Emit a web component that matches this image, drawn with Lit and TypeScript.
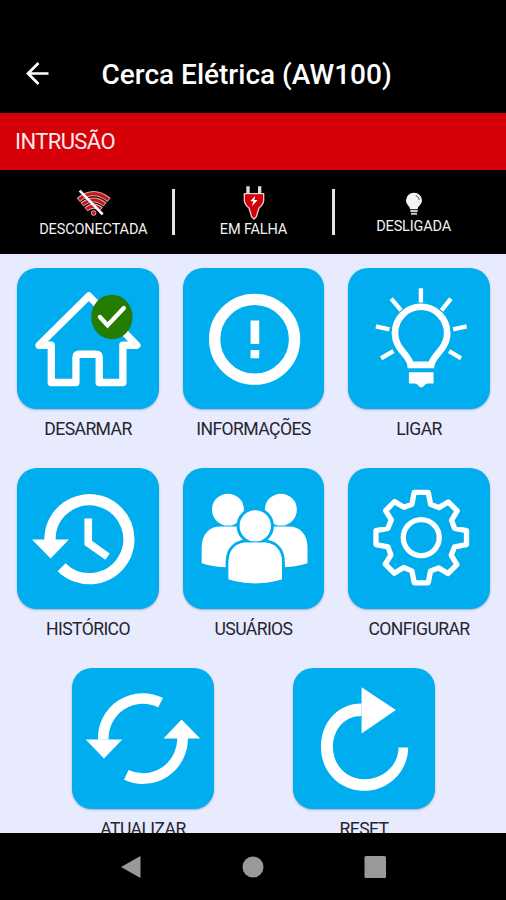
import { LitElement, html, css, svg } from "lit";
import type { SVGTemplateResult } from "lit";
import { customElement, property } from "lit/decorators.js";

// Gear outline: one quarter of the cog, repeated by quarter turns around the centre.
const COG_QUARTER = [
  [-21, -136], [21, -136], [28, -100], [53, -90],
  [81, -107], [108, -80], [91, -52], [100, -28],
];
const cogPoints = [0, 1, 2, 3]
  .flatMap((turn) =>
    COG_QUARTER.map(([x, y]) => {
      let p = [x, y];
      for (let i = 0; i < turn; i++) p = [-p[1], p[0]];
      return `${242 + p[0]},${231 + p[1]}`;
    })
  )
  .join(" ");

const icons: Record<string, SVGTemplateResult> = {
  home: svg`
    <path d="M125 254H88L238 106L382 254H340V366H269V291Q269 281 259 281H209Q199 281 199 291V366H125Z"
      fill="none" stroke="#fff" stroke-width="22" stroke-linejoin="round"/>
    <ellipse cx="307" cy="169" rx="62" ry="67" fill="#247c00"/>
    <path d="M271 169L294 194L343 142" fill="none" stroke="#fff" stroke-width="13" stroke-linecap="round"/>`,
  info: svg`
    <circle cx="237" cy="236" r="120" fill="none" stroke="#fff" stroke-width="34"/>
    <path d="M225 180H251V250H225ZM225 268H251V293H225Z" fill="#fff"/>`,
  bulb: svg`
    <path d="M210 313C207 283 163 266 163 218A78 79 0 0 1 320 218C320 266 276 283 272 313Z"
      fill="none" stroke="#fff" stroke-width="20"/>
    <path d="M205 335H279V369H261Q252 371 249 377Q242 384 235 377Q232 371 223 369H205Z" fill="#fff"/>
    <path d="M241 89V119M156 119L177 144M327 119L307 144M112 199L140 205M372 199L344 205M127 290L153 275M356 290L331 275"
      stroke="#fff" stroke-width="13" stroke-linecap="square" fill="none"/>`,
  history: svg`
    <path d="M121 240V233A118.500 118.500 0 1 1 156 320" fill="none" stroke="#fff" stroke-width="34"/>
    <path d="M67 237H178L123 294Z" fill="#fff"/>
    <path d="M236 174V247L294 288" fill="none" stroke="#fff" stroke-width="23"/>`,
  users: svg`
    <g fill="#fff">
      <circle cx="157" cy="147" r="48"/><circle cx="316" cy="147" r="48"/>
      <path d="M78 308V262C78 220 101 198 136 198H180C215 198 230 220 230 262V308Q154 332 78 308Z"/>
      <path d="M396 308V262C396 220 373 198 338 198H294C259 198 244 220 244 262V308Q320 332 396 308Z"/>
    </g>
    <g fill="#fff" stroke="#00aeef" stroke-width="18" paint-order="stroke">
      <path d="M159 356V305C159 266 182 246 216 246H262C296 246 319 266 319 305V356Q239 380 159 356Z"/>
      <circle cx="239" cy="196" r="47"/>
    </g>
    <path d="M159 356V305C159 266 182 246 216 246H262C296 246 319 266 319 305V356Q239 380 159 356Z" fill="#fff"/>`,
  gear: svg`
    <g fill="none" stroke="#fff" stroke-width="16" stroke-linejoin="round">
      <polygon points=${cogPoints}/>
      <circle cx="242" cy="231" r="54"/>
    </g>`,
  sync: svg`
    <path d="M131 252A119 119 0 0 1 303 141" fill="none" stroke="#fff" stroke-width="32"/>
    <path d="M369 246A119 119 0 0 1 200 358" fill="none" stroke="#fff" stroke-width="32"/>
    <path d="M78 252H188L133 309ZM312 249H422L366 192Z" fill="#fff"/>`,
  reset: svg`
    <path d="M243 144C174 144 121 198 121 275C121 350 179 406 252 406C323 406 383 348 383 276H354C354 330 307 371 252 371C197 371 157 328 157 275C157 220 193 181 243 181Z" fill="#fff"/>
    <path d="M243 95L346 163L243 234Z" fill="#fff"/>`,
};

// Part of each drawing's coordinate space that the tile face covers.
const FACE = "22 22 425 425";
const LOWER_FACE = "37 37 425 425";

@customElement("action-tile")
export class ActionTile extends LitElement {
  @property() icon = "";
  @property() label = "";

  static styles = css`
    :host { display: flex; flex-direction: column; align-items: center; width: 141.500px; height: 200px; }
    .tile {
      flex: none; width: 141.500px; height: 141.500px; border-radius: 20px; background: #00aeef;
      box-shadow: 0 1px 2px rgba(40, 60, 100, 0.35);
    }
    svg { display: block; width: 100%; height: 100%; }
    .label {
      margin-top: 9px; font-size: 17.600px; line-height: 22px; letter-spacing: -0.6px;
      color: #25262e; white-space: nowrap;
    }
  `;

  render() {
    const face = this.icon === "sync" || this.icon === "reset" ? LOWER_FACE : FACE;
    return html`
      <div class="tile"><svg viewBox=${face}>${icons[this.icon]}</svg></div>
      <div class="label">${this.label}</div>`;
  }
}

@customElement("app-root")
export class AppRoot extends LitElement {
  static styles = css`
    :host {
      display: flex; flex-direction: column; width: 506px; height: 900px; overflow: hidden;
      background: #000; color: #fff; font-family: Roboto, "Liberation Sans", sans-serif;
    }
    svg { display: block; }
    header { height: 113px; flex: none; box-sizing: border-box; padding: 37px 0 0 26px; display: flex; align-items: center; }
    .back { width: 23px; height: 23px; margin: 0 52.500px 3px 0; }
    h1 { margin: 0; font-size: 28px; font-weight: 500; line-height: 32px; white-space: nowrap; }
    .alert {
      height: 57px; flex: none; display: flex; align-items: center; padding-left: 15px;
      background: #d60009; font-size: 22px; letter-spacing: -0.6px; color: #ffe9e9;
    }
    .status { height: 83.500px; flex: none; display: flex; padding: 0 14px 0 15px; box-sizing: border-box; }
    .cell { flex: 1; display: flex; flex-direction: column; align-items: center; padding-top: 14px; }
    .cell.low { padding-top: 16px; }
    .cell .pic { height: 37px; display: flex; align-items: center; }
    .cell.low .pic { height: 32px; padding-top: 4px; box-sizing: border-box; }
    .cell .text { font-size: 14.500px; line-height: 18px; letter-spacing: -0.15px; white-space: nowrap; color: #f2f2f2; }
    .rule { width: 3.500px; height: 46px; margin-top: 19px; background: #e4e4e4; }
    main { flex: 1; min-height: 0; overflow: hidden; background: #e8eafe; padding-top: 14px; box-sizing: border-box; }
    .row { display: flex; justify-content: center; gap: 24px; height: 200px; padding-left: 1px; }
    .row.pair { gap: 79.500px; }
    nav { height: 67px; flex: none; display: flex; justify-content: center; align-items: center; gap: 100px; }
    .key { width: 22px; height: 24px; }
  `;

  render() {
    return html`
      <header>
        <svg class="back" viewBox="0 0 23 23" fill="none" stroke="#fff" stroke-width="2.700">
          <path d="M22.500 11.500H2.500M12.500 1L2 11.500L12.500 22"/>
        </svg>
        <h1>Cerca Elétrica (AW100)</h1>
      </header>
      <div class="alert"><span>INTRUSÃO</span></div>
      <section class="status">
        <div class="cell">
          <div class="pic">
            <svg width="35" height="28" viewBox="228 443 105 84">
              <g fill="none" stroke="#eba5a5" stroke-width="15">
                <path d="M235 476Q281 438 327 476M246 490Q281 462 315 490M258 504Q281 485 304 504"/>
              </g>
              <g fill="none" stroke="#c4161c" stroke-width="9">
                <path d="M237 475Q281 439 325 475M248 489Q281 463 313 489M260 503Q281 487 302 503"/>
              </g>
              <circle cx="281" cy="515" r="7" fill="#c4161c" stroke="#eba5a5" stroke-width="3"/>
              <path d="M239 448L308 519" stroke="#fff" stroke-width="8"/>
            </svg>
          </div>
          <div class="text">DESCONECTADA</div>
        </div>
        <div class="rule"></div>
        <div class="cell">
          <div class="pic">
            <svg width="24" height="35" viewBox="725 433 72 105">
              <path d="M738 437h10v24h-10zM773 437h10v24h-10z" fill="#ddd"/>
              <path d="M732 459H790V480Q788 493 776 502L768 528L761 535L754 528L746 502Q734 493 732 480Z"
                fill="#d0000a" stroke="#f1cccc" stroke-width="4" stroke-linejoin="round"/>
              <path d="M765 465L750 482H759L755 497L772 478H762Z" fill="#fff"/>
            </svg>
          </div>
          <div class="text">EM FALHA</div>
        </div>
        <div class="rule"></div>
        <div class="cell low">
          <div class="pic">
            <svg width="18" height="24" viewBox="1215 458 54 72">
              <path d="M1230 510C1230 500 1218 497 1218 483A24 23 0 0 1 1266 483C1266 497 1253 500 1253 510Z" fill="#f4f4f4"/>
              <path d="M1231 515H1253M1233 523H1251" stroke="#c9c9c9" stroke-width="6"/>
              <path d="M1247 468Q1257 472 1258 482" fill="none" stroke="#555" stroke-width="3"/>
            </svg>
          </div>
          <div class="text">DESLIGADA</div>
        </div>
      </section>
      <main>
        <div class="row">
          <action-tile icon="home" label="DESARMAR"></action-tile>
          <action-tile icon="info" label="INFORMAÇÕES"></action-tile>
          <action-tile icon="bulb" label="LIGAR"></action-tile>
        </div>
        <div class="row">
          <action-tile icon="history" label="HISTÓRICO"></action-tile>
          <action-tile icon="users" label="USUÁRIOS"></action-tile>
          <action-tile icon="gear" label="CONFIGURAR"></action-tile>
        </div>
        <div class="row pair">
          <action-tile icon="sync" label="ATUALIZAR"></action-tile>
          <action-tile icon="reset" label="RESET"></action-tile>
        </div>
      </main>
      <nav>
        <svg class="key" viewBox="0 0 22 24"><path d="M1 12L20.500 1V23Z" fill="#999"/></svg>
        <svg class="key" viewBox="0 0 22 24"><circle cx="11" cy="12" r="10.500" fill="#999"/></svg>
        <svg class="key" viewBox="0 0 22 24"><rect x="0.500" y="1" width="21.500" height="22" rx="1.500" fill="#999"/></svg>
      </nav>`;
  }
}
